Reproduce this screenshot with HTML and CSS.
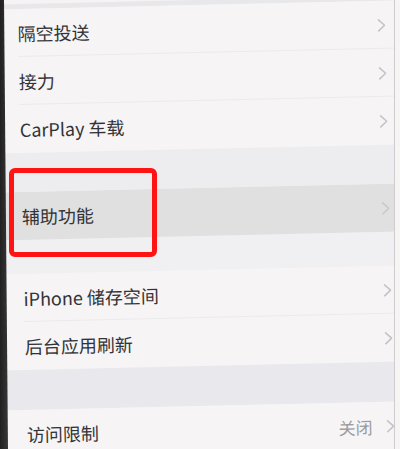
FILE: index.html
```html
<!DOCTYPE html>
<html lang="zh-CN">
<head>
<meta charset="utf-8">
<title>设置</title>
<link rel="stylesheet" href="styles.css">
</head>
<body>
<div class="screen">
  <div class="panel">
    <div class="band band-top"></div>
    <div class="group">
      <div class="row"><span class="label">隔空投送</span><span class="end"><svg class="chev" viewBox="0 0 8 13"><polyline points="1,1 7,6.5 1,12"/></svg></span></div>
      <div class="row"><span class="label">接力</span><span class="end"><svg class="chev" viewBox="0 0 8 13"><polyline points="1,1 7,6.5 1,12"/></svg></span></div>
      <div class="row last"><span class="label">CarPlay 车载</span><span class="end"><svg class="chev" viewBox="0 0 8 13"><polyline points="1,1 7,6.5 1,12"/></svg></span></div>
    </div>
    <div class="band band-1"></div>
    <div class="group">
      <div class="row last active"><span class="label">辅助功能</span><span class="end"><svg class="chev" viewBox="0 0 8 13"><polyline points="1,1 7,6.5 1,12"/></svg></span></div>
    </div>
    <div class="band band-2"></div>
    <div class="group">
      <div class="row"><span class="label">iPhone 储存空间</span><span class="end"><svg class="chev" viewBox="0 0 8 13"><polyline points="1,1 7,6.5 1,12"/></svg></span></div>
      <div class="row last"><span class="label">后台应用刷新</span><span class="end"><svg class="chev" viewBox="0 0 8 13"><polyline points="1,1 7,6.5 1,12"/></svg></span></div>
    </div>
    <div class="band band-3"></div>
    <div class="group">
      <div class="row last"><span class="label">访问限制</span><span class="end"><span class="value">关闭</span><svg class="chev" viewBox="0 0 8 13"><polyline points="1,1 7,6.5 1,12"/></svg></span></div>
    </div>
  </div>
  <div class="bezel"></div>
  <div class="edge"></div>
  <div class="mark"></div>
</div>
</body>
</html>
```

FILE: styles.css
```css
html, body {
  margin: 0;
  padding: 0;
}
body {
  width: 400px;
  height: 449px;
  overflow: hidden;
  background: #f5f3f4;
  font-family: "Noto Sans CJK SC", "Noto Sans", sans-serif;
}
.screen {
  position: relative;
  width: 400px;
  height: 449px;
  overflow: hidden;
}
.panel {
  width: 400px;
  height: 449px;
  transform: rotate(-1.3deg);
  transform-origin: 200px 224px;
  display: flex;
  flex-direction: column;
  background: #f5f3f4;
}
.band {
  flex: none;
}
.band-top { height: 5px; background: #e8e7ea; }
.band-1 { height: 39px; background: #ededf0; }
.band-2 { height: 34px; background: #f0eff2; }
.band-3 { height: 40px; background: #e9e8ec; }
.group {
  display: flex;
  flex-direction: column;
  background: #f6f4f5;
  flex: none;
}
.row {
  position: relative;
  height: 48px;
  display: flex;
  align-items: center;
  justify-content: space-between;
  padding: 0 10px 0 22px;
  box-sizing: border-box;
}
.row::after {
  content: "";
  position: absolute;
  left: 22px;
  right: 0;
  bottom: 0;
  height: 1px;
  background: #ebeaec;
}
.row.last::after { display: none; }
.row.active { background: #e0e0e1; }
.label {
  font-size: 18px;
  color: #333335;
  white-space: nowrap;
}
.end {
  display: flex;
  align-items: center;
  gap: 14px;
}
.value {
  font-size: 17px;
  color: #9c9ca0;
}
.chev {
  width: 8px;
  height: 13px;
  fill: none;
  stroke: #c4c4c8;
  stroke-width: 1.6;
  stroke-linecap: round;
  stroke-linejoin: round;
}
.row.active .chev { stroke: #cacacd; }
.bezel {
  position: absolute;
  left: 0;
  top: 0;
  width: 9px;
  height: 449px;
  background: linear-gradient(to right, #202020, #3a3a3a);
  clip-path: polygon(0 0, 4px 0, 8px 100%, 0 100%);
}
.edge {
  position: absolute;
  right: 0;
  top: 0;
  width: 5px;
  height: 449px;
  background: #f7f4f4;
  border-left: 1.5px solid #cfcdd0;
}
.mark {
  position: absolute;
  left: 9px;
  top: 168px;
  width: 148px;
  height: 89px;
  box-sizing: border-box;
  border: 5px solid #ff1414;
  border-radius: 6px;
}
```
